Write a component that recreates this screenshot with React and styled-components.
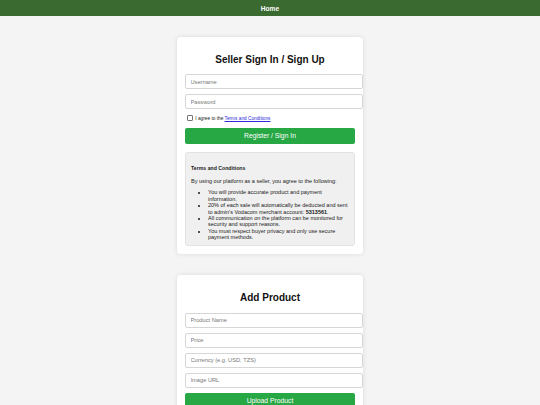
import styled, { createGlobalStyle } from 'styled-components'

const GlobalStyle = createGlobalStyle`
  html, body {
    margin: 0;
    padding: 0;
    background: #f4f4f4;
    font-family: "Liberation Sans", Arial, sans-serif;
    color: #111;
  }
`

const Header = styled.header`
  height: 16px;
  background: #3a6a2f;
  color: #fff;
  display: flex;
  align-items: center;
  justify-content: center;
  font-size: 6.6px;
  font-weight: 700;
`

const Card = styled.section`
  box-sizing: border-box;
  width: 186px;
  margin: 21px auto;
  padding: 8px;
  background: #fff;
  border-radius: 4px;
  box-shadow: 0 0 5px rgba(0, 0, 0, 0.1);
`

const Title = styled.h2`
  margin: 9px 0 8.7px;
  font-size: 10px;
  font-weight: 700;
  text-align: center;
  line-height: 11.5px;
`

const Field = styled.input`
  display: block;
  box-sizing: border-box;
  width: 178px;
  height: 15px;
  margin: 0 0 5px;
  padding: 0 4.5px;
  border: 0.6px solid #d6d6d6;
  border-radius: 2px;
  font-family: inherit;
  font-size: 5.7px;
  color: #222;
  background: #fff;
  outline: none;
  &::placeholder { color: #777; }
`

const AgreeRow = styled.label`
  display: flex;
  align-items: center;
  gap: 2.6px;
  height: 8px;
  margin: 4px 0 5.5px 2.3px;
  font-size: 4.75px;
  color: #222;
`

const Check = styled.input`
  appearance: none;
  box-sizing: border-box;
  width: 5.4px;
  height: 5.4px;
  margin: 0;
  border: 0.6px solid #767676;
  border-radius: 1px;
  background: #fff;
`

const Link = styled.a`
  color: #2b2bd8;
  text-decoration: underline;
`

const Button = styled.button`
  display: block;
  width: 100%;
  height: 16px;
  margin: 0 0 ${p => p.$after || 0}px;
  padding: 0;
  border: none;
  border-radius: 2px;
  background: #28a745;
  color: #fff;
  font-family: inherit;
  font-size: 6.75px;
`

const Terms = styled.div`
  padding: 5px;
  background: #f0f0f0;
  border: 0.5px solid #e2e2e2;
  border-radius: 3px;
  font-size: 5.5px;
  color: #1a1a1a;
`

const TermsHeading = styled.h4`
  margin: 7.4px 0 7px;
  font-size: 5.2px;
  font-weight: 700;
`

const TermsText = styled.p`
  margin: 0 0 5px;
`

const TermsList = styled.ul`
  margin: 0;
  padding-left: 17px;
  line-height: 1.16;
`

export default function App() {
  return (
    <>
      <GlobalStyle />
      <Header>Home</Header>

      <Card>
        <Title>Seller Sign In / Sign Up</Title>
        <Field placeholder="Username" />
        <Field type="password" placeholder="Password" />
        <AgreeRow>
          <Check type="checkbox" />
          <span>I agree to the <Link href="#terms">Terms and Conditions</Link></span>
        </AgreeRow>
        <Button $after={8.3}>Register / Sign In</Button>
        <Terms id="terms">
          <TermsHeading>Terms and Conditions</TermsHeading>
          <TermsText>By using our platform as a seller, you agree to the following:</TermsText>
          <TermsList>
            <li>You will provide accurate product and payment information.</li>
            <li>20% of each sale will automatically be deducted and sent to admin's Vodacom merchant account: <strong>5313561</strong>.</li>
            <li>All communication on the platform can be monitored for security and support reasons.</li>
            <li>You must respect buyer privacy and only use secure payment methods.</li>
          </TermsList>
        </Terms>
      </Card>

      <Card>
        <Title>Add Product</Title>
        <Field placeholder="Product Name" />
        <Field placeholder="Price" />
        <Field placeholder="Currency (e.g. USD, TZS)" />
        <Field placeholder="Image URL" />
        <Button>Upload Product</Button>
      </Card>
    </>
  )
}
